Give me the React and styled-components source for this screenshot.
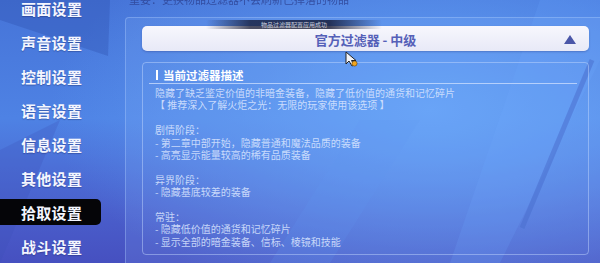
import React from 'react';
import styled, {createGlobalStyle} from 'styled-components';

// settings screen: pickup filter page

const GlobalStyle = createGlobalStyle`
  html, body {
    margin: 0;
    padding: 0;
    width: 600px;
    height: 263px;
    overflow: hidden;
    font-family: "Noto Sans CJK SC", "Noto Sans", sans-serif;
  }
`

const navItems = ['画面设置', '声音设置', '控制设置', '语言设置', '信息设置', '其他设置', '拾取设置', '战斗设置'];
const activeNav = '拾取设置';

const description = [
  '隐藏了缺乏鉴定价值的非暗金装备，隐藏了低价值的通货和记忆碎片',
  '【 推荐深入了解火炬之光：无限的玩家使用该选项 】',
  '',
  '剧情阶段：',
  '- 第二章中部开始，隐藏普通和魔法品质的装备',
  '- 高亮显示能量较高的稀有品质装备',
  '',
  '异界阶段：',
  '- 隐藏基底较差的装备',
  '',
  '常驻：',
  '- 隐藏低价值的通货和记忆碎片',
  '- 显示全部的暗金装备、信标、棱镜和技能'
];

function Backdrop() {
  // decorative diagonal shapes behind the screen
  return (
    <BackdropSvg viewBox="0 0 600 263" preserveAspectRatio="none">
      <polygon points="0,0 110,0 108,56 0,20" fill="#2f4fae" opacity="0.35" />
      <polygon points="0,150 60,120 0,263" fill="#3a4fb8" opacity="0.25" />
      <polygon points="540,0 600,0 600,60 500,263 450,263" fill="#6aa8ff" opacity="0.18" />
      <line x1="592" y1="60" x2="522" y2="228" stroke="#3f63c8" strokeWidth="5" opacity="0.55" />
      <polygon points="360,120 420,120 330,263 270,263" fill="#5a8ff0" opacity="0.18" />
    </BackdropSvg>
  );
}

function Cursor() {
  return (
    <CursorSvg width="14" height="17" viewBox="0 0 14 17">
      <path d="M1 1 L1 13 L4 10 L7 15 L9 14 L6.5 9.5 L11 9.5 Z" fill="#f4f4f8" stroke="#222" strokeWidth="1" strokeLinejoin="round" />
      <circle cx="9.5" cy="12.5" r="2.6" fill="#f2a51c" stroke="#5a3a08" strokeWidth="0.6" />
    </CursorSvg>
  );
}

export default function App() {
  return (
    <Screen>
      <GlobalStyle />
      <Backdrop />
      <Nav>
        {navItems.map(item => (
          <NavItem key={item} active={item === activeNav}>{item}</NavItem>
        ))}
      </Nav>
      <Content>
        <Notice>重要：更换物品过滤器不会刷新已掉落的物品</Notice>
        <Panel>
          <Dropdown>
            <Toast>物品过滤器配置应用成功</Toast>
            <DropdownLabel>官方过滤器 - 中级</DropdownLabel>
            <Caret viewBox="0 0 12 9" width="12" height="9">
              <polygon points="6,0 12,9 0,9" fill="#4a56a8" />
            </Caret>
            <Cursor />
          </Dropdown>
          <DescBox>
            <DescTitle>当前过滤器描述</DescTitle>
            <DescBody>
              {description.map((line, i) => (
                <DescLine key={i}>{line || '\u00a0'}</DescLine>
              ))}
            </DescBody>
          </DescBox>
        </Panel>
      </Content>
    </Screen>
  );
}

const Screen = styled.div`
  position: relative;
  width: 600px;
  height: 263px;
  overflow: hidden;
  display: grid;
  grid-template-columns: 125px 1fr;
  background:
    radial-gradient(ellipse 380px 200px at 430px 110px, #62a0f6 0%, rgba(98,160,246,0) 100%),
    linear-gradient(180deg, #4674d8 0%, #4e82e4 45%, #4a5fcc 80%, #4650c0 100%);
`

const BackdropSvg = styled.svg`
  position: absolute;
  inset: 0;
  width: 600px;
  height: 263px;
  pointer-events: none;
`

const Nav = styled.nav`
  position: relative;
  display: flex;
  flex-direction: column;
  gap: 8px;
  margin-top: -5px;
`

const NavItem = styled.div`
  height: 26px;
  width: 101px;
  box-sizing: border-box;
  padding-left: 21px;
  display: flex;
  align-items: center;
  font-size: 15px;
  font-weight: 700;
  letter-spacing: 0.3px;
  color: #f4f6ff;
  border-radius: 0 5px 5px 0;
  background: ${props => props.active ? '#050508' : 'transparent'};
  text-shadow: ${props => props.active ? 'none' : '0 1px 1px rgba(20,30,90,0.35)'};
`

const Content = styled.div`
  position: relative;
  display: flex;
  flex-direction: column;
`

const Notice = styled.div`
  height: 24px;
  margin-top: -7px;
  padding-left: 4px;
  font-size: 11px;
  line-height: 12px;
  color: #2a3d8c;
  opacity: 0.75;
  filter: blur(0.4px);
  white-space: nowrap;
`

const Panel = styled.section`
  flex: 1;
  display: flex;
  flex-direction: column;
  gap: 11px;
  padding: 8px 11px 0 16px;
  background: rgba(150, 190, 255, 0.14);
  border-top: 1px solid rgba(180, 210, 255, 0.35);
  border-left: 1px solid rgba(180, 210, 255, 0.35);
  border-radius: 4px 0 0 0;
`

const Dropdown = styled.div`
  position: relative;
  flex-shrink: 0;
  height: 25px;
  display: flex;
  align-items: center;
  justify-content: center;
  background: linear-gradient(180deg, #f7f7fd 0%, #e8e9f7 100%);
  border-radius: 5px;
  box-shadow: 0 1px 2px rgba(30, 40, 110, 0.3);
`

const DropdownLabel = styled.div`
  font-size: 13px;
  font-weight: 700;
  color: #5560b8;
  padding-top: 1px;
`

const Caret = styled.svg`
  position: absolute;
  right: 13px;
  top: 9px;
`

const Toast = styled.div`
  position: absolute;
  left: 64px;
  top: -6px;
  width: 176px;
  height: 9px;
  display: flex;
  align-items: center;
  justify-content: center;
  font-size: 6px;
  line-height: 9px;
  color: rgba(230, 232, 245, 0.85);
  background: linear-gradient(90deg, rgba(20,24,50,0) 0%, rgba(20,24,50,0.75) 25%, rgba(20,24,50,0.8) 70%, rgba(20,24,50,0) 100%);
`

const CursorSvg = styled.svg`
  position: absolute;
  left: 203px;
  top: 25px;
`

const DescBox = styled.div`
  flex-shrink: 0;
  height: 193px;
  box-sizing: border-box;
  border: 1px solid rgba(200, 220, 255, 0.45);
  border-radius: 4px;
  padding: 4px 11px 0 6px;
`

const DescTitle = styled.div`
  display: flex;
  align-items: center;
  gap: 5px;
  padding: 0 0 1px 7px;
  height: 15px;
  font-size: 11.5px;
  font-weight: 700;
  color: #ffffff;
  border-bottom: 1px solid rgba(215, 230, 255, 0.7);

  &::before {
    content: '';
    width: 2px;
    height: 10px;
    background: #ffffff;
  }
`

const DescBody = styled.div`
  padding: 3px 0 0 6px;
`

const DescLine = styled.div`
  font-size: 10px;
  line-height: 12.4px;
  color: rgba(222, 232, 255, 0.85);
  white-space: nowrap;
`
